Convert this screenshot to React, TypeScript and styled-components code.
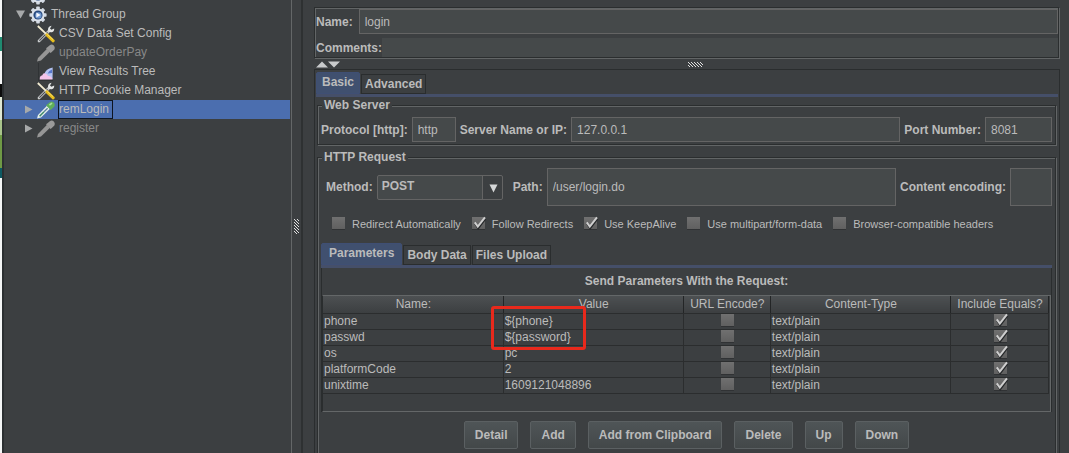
import React from "react";
import styled, { createGlobalStyle, css } from "styled-components";

const Global = createGlobalStyle`
  * { box-sizing: border-box; }
  body {
    margin: 0;
    overflow: hidden;
    background: #3c3f41;
    color: #bbbbbb;
    font: 12px "Liberation Sans", Arial, sans-serif;
  }
  button, input, select { font: inherit; color: inherit; }
`;

const etched = css`
  border: 1px solid #2b2e2f;
  box-shadow: 1px 1px 0 #626566, inset 1px 1px 0 #626566;
`;

const Shell = styled.div`
  display: flex;
  height: 100vh;
  overflow: hidden;
`;

const Desktop = styled.div`
  width: 4px;
  flex: none;
  border-right: 2px solid #2b2f31;
  background: linear-gradient(
    #f4f6f6 0 37px, #1f8a70 37px 51px, #f4f6f6 51px 84px, #0c0c0c 84px 97px,
    #dfe8d4 97px 120px, #a9c48b 120px 135px, #6f9a45 135px 168px, #0d5a63 168px 178px, #f4f6f6 178px
  );
`;

const TreePane = styled.nav`
  width: 288px;
  flex: none;
  overflow: hidden;
  border-right: 1px solid #646768;
`;

const Tree = styled.ul`
  list-style: none;
  margin: -14px 0 0;
  padding: 0;
`;

const Node = styled.li<{ $level: number; $selected?: boolean; $disabled?: boolean }>`
  display: flex;
  align-items: center;
  height: 19px;
  margin-right: 1px;
  padding-left: ${(p) => 12 + p.$level * 8}px;
  color: ${(p) => (p.$disabled ? "#888888" : "#bbbbbb")};
  background: ${(p) => (p.$selected ? "#4b6eaf" : "transparent")};
`;

const Twisty = styled.span`
  width: 12px;
  height: 19px;
  display: flex;
  align-items: center;
`;

const NodeText = styled.span<{ $focus?: boolean }>`
  height: 19px;
  line-height: 17px;
  padding: 0 3px 0 0;
  border: 1px solid ${(p) => (p.$focus ? "#0d1420" : "transparent")};
`;

const NodeIcon = styled.span`
  display: flex;
  width: 22px;
  padding-left: 1px;
`;

const SideSplitter = styled.div`
  width: 11px;
  flex: none;
  display: flex;
  align-items: center;
  justify-content: center;
  border-right: 2px solid #2e3132;
`;

const Main = styled.main`
  flex: 1;
  min-width: 0;
  display: flex;
  flex-direction: column;
  padding: 7px 9px 0 11px;
`;

const Identity = styled.section`
  ${etched}
  flex: none;
  margin: 0 1px 1px 0;
  padding: 1px 0 0 1px;
`;

const Line = styled.div<{ $gap?: number; $top?: number; $indent?: number }>`
  display: flex;
  align-items: center;
  gap: ${(p) => p.$gap ?? 4}px;
  margin-top: ${(p) => p.$top ?? 0}px;
  padding-left: ${(p) => p.$indent ?? 0}px;
`;

const Label = styled.label`
  font-weight: bold;
  white-space: nowrap;
`;

const Field = styled.input<{ $w?: number; $tall?: boolean; $plain?: boolean }>`
  ${(p) => (p.$w ? css`width: ${p.$w}px; flex: none;` : css`flex: 1; min-width: 0;`)}
  height: ${(p) => (p.$tall ? 38 : p.$plain ? 19 : 25)}px;
  padding: 0 5px;
  border: ${(p) => (p.$plain ? "0" : "1px solid #646464")};
  border-radius: 0;
  background: #45494a;
  outline: none;
`;

const TopSplitter = styled.div`
  display: flex;
  flex: none;
  align-items: center;
  height: 10px;
  padding: 0 10px 0 2px;
`;

const Grip = styled.span`
  margin: 0 auto;
  display: flex;
`;

const Pane = styled.section`
  flex: 1;
  border: 1px solid #2a2d2e;
  border-bottom: 0;
  padding: 2px 1px 0;
`;

const TabBar = styled.div`
  display: flex;
  align-items: flex-end;
  gap: 1px;
  border-bottom: 3px solid #454f69;
`;

const Tab = styled.button<{ $active?: boolean; $inset?: number }>`
  height: ${(p) => (p.$active ? 22 : 20)}px;
  padding: 0 ${(p) => p.$inset ?? 3}px ${(p) => (p.$active ? 2 : 0)}px;
  font-weight: bold;
  border: 1px solid ${(p) => (p.$active ? "#3f4f74" : "#2a2d2e")};
  border-radius: ${(p) => (p.$active ? "2px 2px 0 0" : "0")};
  background: ${(p) => (p.$active ? "#40506f" : "#3c3f41")};
`;

const Group = styled.fieldset<{ $open?: boolean }>`
  ${etched}
  margin: 0 2px 4px 1px;
  min-width: 0;
  padding: 4px 3px 2px;
  ${(p) => p.$open && css`
    border-bottom: 0;
    padding: 3px 3px 16px;
  `}
`;

const Legend = styled.legend`
  margin-left: 1px;
  padding: 0 2px;
  font-weight: bold;
  line-height: 16px;
  background: #3c3f41;
`;

const Combo = styled.div`
  position: relative;
  width: 126px;
  flex: none;
  display: flex;
  margin-right: 6px;
`;

const Select = styled.select`
  appearance: none;
  width: 100%;
  height: 25px;
  padding: 0 4px 2px;
  border: 1px solid #646464;
  border-radius: 2px;
  font-weight: bold;
  background: linear-gradient(90deg, #45494a 104px, #646464 104px 105px, #3c3f41 105px);
  outline: none;
`;

const ComboArrow = styled.svg`
  position: absolute;
  right: 5px;
  top: 9px;
  pointer-events: none;
`;

const Options = styled.div`
  display: flex;
  gap: 11px;
  margin: 11px 0 13px 11px;
`;

const Option = styled.label`
  display: flex;
  align-items: center;
  gap: 7px;
  height: 13px;
  font-size: 11px;
  white-space: nowrap;
`;

const TickBox = styled.span`
  position: relative;
  display: inline-block;
  width: 13px;
  height: 13px;
  vertical-align: top;
  input {
    appearance: none;
    display: block;
    width: 13px;
    height: 13px;
    margin: 0;
    background: linear-gradient(#707070, #606060);
    border-bottom: 1px solid #303234;
  }
  svg {
    position: absolute;
    left: 0;
    top: -1px;
    pointer-events: none;
  }
`;

const Params = styled.div`
  border: 0 solid #2a2d2e;
  border-width: 0 1px;
  padding: 5px 0 0;
`;

const Caption = styled.div`
  height: 16px;
  line-height: 16px;
  text-align: center;
  font-weight: bold;
  margin-bottom: 6px;
`;

const TableBox = styled.div`
  position: relative;
  height: 117px;
  border: 1px solid #646768;
  border-left-color: #2a2d2e;
  padding-right: 1px;
`;

const Grid = styled.table`
  width: 100%;
  table-layout: fixed;
  border-collapse: collapse;
  th, td {
    border-right: 1px solid #2b2d2e;
    border-bottom: 1px solid #2b2d2e;
    padding: 0 0 0 1px;
    height: 16px;
    line-height: 15px;
    white-space: nowrap;
  }
  th {
    height: 17px;
    font-weight: normal;
    background: linear-gradient(#4d5052, #3c3f41);
    border-right-color: #232526;
  }
  td.mark { text-align: center; }
`;

const Highlight = styled.div`
  position: absolute;
  left: 168px;
  top: 10px;
  width: 95px;
  height: 44px;
  border: 3px solid #e8291c;
  border-radius: 3px;
`;

const Actions = styled.div`
  display: flex;
  justify-content: center;
  gap: 12px;
  padding-top: 9px;
`;

const Action = styled.button`
  height: 28px;
  padding: 0 10px 1px;
  font-weight: bold;
  white-space: nowrap;
  border: 1px solid #5b6062;
  border-radius: 2px;
  background: linear-gradient(#4f5557, #434849);
`;

const Gear = () => (
  <svg width="18" height="18" viewBox="0 0 18 18">
    {[0, 45, 90, 135].map((a) => (
      <rect key={a} x="7.2" y="0.4" width="3.6" height="17.2" rx="0.8" fill="#d3dae3" transform={`rotate(${a} 9 9)`} />
    ))}
    <circle cx="9" cy="9" r="6.6" fill="#dbe1e9" />
    <circle cx="9" cy="9" r="4.6" fill="#27497d" />
    <circle cx="9.4" cy="9.4" r="3.2" fill="#6f97cf" />
    <path d="M7.4 6.4 11.6 9 7.4 11.6Z" fill="#f4f8ff" />
  </svg>
);

const Tools = () => (
  <svg width="18" height="18" viewBox="0 0 18 18">
    <path d="M2 16 12 6" stroke="#c9cbcc" strokeWidth="2.8" strokeLinecap="round" />
    <path d="M2.4 15.6 10.6 7.4" stroke="#45484a" strokeWidth="1.1" />
    <path d="M14.6 0.8 13 3.4 14.4 4.8 17.2 3.4Q17.4 6.4 14.9 7.2 12.2 7.8 11 5.6 10.6 1.6 14.6 0.8Z" fill="#e4e6e6" />
    <path d="M0.8 1 9.6 9.4" stroke="#f3ecd2" strokeWidth="1.8" />
    <path d="M10 9.8 16.2 15.8" stroke="#e6bd1d" strokeWidth="3" strokeLinecap="round" />
    <path d="M10.4 9.4 16 14.6" stroke="#f8e27a" strokeWidth="0.8" />
  </svg>
);

const Dropper = ({ live }: { live?: boolean }) => (
  <svg width="18" height="18" viewBox="0 0 18 18">
    <path d="M0 17.4 1 14 10 4.8 13 7.8 4 16.6Z" fill={live ? "#e6f0ec" : "#969696"} />
    {live && <path d="M2.6 15.2 7 10.8" stroke="#3f8a6a" strokeWidth="1.5" />}
    {live && <path d="M7 10.8 10.6 7.2" stroke="#5b7f9c" strokeWidth="1.3" />}
    <path d="M9 4.2 13.6 9 14.8 8 17.4 5.4Q18.4 3.2 16.8 1.4 14.8 -0.2 12.8 1.2L10.4 3.2Z" fill={live ? "#5fae5a" : "#9a9a9a"} />
    {live && <path d="M12.4 4.2 15 2.2" stroke="#a8dca2" strokeWidth="1.6" />}
  </svg>
);

const Chart = () => (
  <svg width="18" height="18" viewBox="0 0 18 18">
    <path d="M1.5 0V17.5H16" stroke="#303335" fill="none" />
    <path d="M7 12Q8.4 6 15.6 4.6V16H7Z" fill="#b4c4f3" />
    <path d="M10.6 10.4Q12 7.4 15 6.4V10Z" fill="#5876cc" />
    <path d="M2.8 16.6Q2.4 12.6 5.4 12.2 6 9.4 8.4 10.4 10.4 11 11 13 14.4 12.4 15.6 16.6Z" fill="#f3c4ea" />
  </svg>
);

const Arrow = ({ open }: { open?: boolean }) => (
  <svg width="9" height="9" viewBox="0 0 9 9">
    <path d={open ? "M0 0.5H9L4.5 8.5Z" : "M1 0.5V8.5L8.5 4.5Z"} fill="#a7a9aa" />
  </svg>
);

const Tick = ({ label, checked, id }: { label?: string; checked?: boolean; id?: string }) => (
  <TickBox>
    <input type="checkbox" id={id} aria-label={label} defaultChecked={checked} />
    {checked && (
      <svg width="15" height="14" viewBox="0 0 15 14">
        <path d="M3.2 7.4 6.2 12 13.4 2.6" fill="none" stroke="#26282a" strokeWidth="2.2" />
        <path d="M2.8 6.4 5.8 10.6 13 1.4" fill="none" stroke="#cfcfcf" strokeWidth="2" />
      </svg>
    )}
  </TickBox>
);

const Dots = ({ vertical }: { vertical?: boolean }) => {
  const w = vertical ? 5 : 15;
  const h = vertical ? 15 : 5;
  const cells = Array.from({ length: w * h }, (_, i) => [i % w, Math.floor(i / w)]);
  return (
    <svg width={w} height={h} viewBox={`0 0 ${w} ${h}`} shapeRendering="crispEdges">
      {cells
        .filter(([x, y]) => (x - y + 15) % 3 === 0)
        .map(([x, y]) => (
          <rect key={`${x}-${y}`} x={x} y={y} width="1" height="1" fill="#e0e0e0" />
        ))}
    </svg>
  );
};

const nodes = [
  { text: "CSV Data Set Config", icon: <Tools /> },
  { text: "updateOrderPay", icon: <Dropper />, disabled: true },
  { text: "View Results Tree", icon: <Chart /> },
  { text: "HTTP Cookie Manager", icon: <Tools /> },
  { text: "remLogin", icon: <Dropper live />, selected: true, branch: true },
  { text: "register", icon: <Dropper />, disabled: true, branch: true },
];

const options = [
  { text: "Redirect Automatically", on: false },
  { text: "Follow Redirects", on: true },
  { text: "Use KeepAlive", on: true },
  { text: "Use multipart/form-data", on: false },
  { text: "Browser-compatible headers", on: false },
];

const rows = [
  ["phone", "${phone}"],
  ["passwd", "${password}"],
  ["os", "pc"],
  ["platformCode", "2"],
  ["unixtime", "1609121048896"],
];

export default function App() {
  return (
    <Shell>
      <Global />
      <Desktop />
      <TreePane aria-label="Test plan">
        <Tree>
          <Node $level={0}>
            <Twisty />
            <NodeIcon><Gear /></NodeIcon>
          </Node>
          <Node $level={0}>
            <Twisty><Arrow open /></Twisty>
            <NodeIcon><Gear /></NodeIcon>
            <NodeText>Thread Group</NodeText>
          </Node>
          {nodes.map((n) => (
            <Node key={n.text} $level={1} $selected={n.selected} $disabled={n.disabled}>
              <Twisty>{n.branch && <Arrow />}</Twisty>
              <NodeIcon>{n.icon}</NodeIcon>
              <NodeText $focus={n.selected}>{n.text}</NodeText>
            </Node>
          ))}
        </Tree>
      </TreePane>
      <SideSplitter><Dots vertical /></SideSplitter>
      <Main>
        <Identity>
          <Line $gap={6}>
            <Label htmlFor="name">Name:</Label>
            <Field id="name" defaultValue="login" />
          </Line>
          <Line $gap={0} $top={4}>
            <Label htmlFor="comments">Comments:</Label>
            <Field id="comments" $plain />
          </Line>
        </Identity>
        <TopSplitter>
          <svg width="25" height="7" viewBox="0 0 25 7">
            <path d="M0 6.5 6 0.5 12 6.5ZM12 0.5H24L18 6.5Z" fill="#c8cacb" />
          </svg>
          <Grip><Dots /></Grip>
        </TopSplitter>
        <Pane>
          <TabBar>
            <Tab $active $inset={5}>Basic</Tab>
            <Tab>Advanced</Tab>
          </TabBar>
          <Group>
            <Legend>Web Server</Legend>
            <Line>
              <Label htmlFor="protocol">Protocol [http]:</Label>
              <Field id="protocol" $w={44} defaultValue="http" />
              <Label htmlFor="server">Server Name or IP:</Label>
              <Field id="server" defaultValue="127.0.0.1" />
              <Label htmlFor="port">Port Number:</Label>
              <Field id="port" $w={67} defaultValue="8081" />
            </Line>
          </Group>
          <Group $open>
            <Legend>HTTP Request</Legend>
            <Line $indent={5}>
              <Label htmlFor="method">Method:</Label>
              <Combo>
                <Select id="method" defaultValue="POST">
                  <option>POST</option>
                  <option>GET</option>
                </Select>
                <ComboArrow width="9" height="9" viewBox="0 0 9 9">
                  <path d="M0.5 0.5H8.5L4.5 8.5Z" fill="#d5d7d8" />
                </ComboArrow>
              </Combo>
              <Label htmlFor="path">Path:</Label>
              <Field id="path" $tall defaultValue="/user/login.do" />
              <Label htmlFor="encoding">Content encoding:</Label>
              <Field id="encoding" $tall $w={42} />
            </Line>
            <Options>
              {options.map((o, i) => (
                <Option key={o.text} htmlFor={`option-${i}`}>
                  <Tick id={`option-${i}`} checked={o.on} />
                  {o.text}
                </Option>
              ))}
            </Options>
            <TabBar>
              <Tab $active $inset={7}>Parameters</Tab>
              <Tab>Body Data</Tab>
              <Tab>Files Upload</Tab>
            </TabBar>
            <Params>
              <Caption>Send Parameters With the Request:</Caption>
              <TableBox>
                <Grid>
                  <colgroup>
                    <col />
                    <col />
                    <col style={{ width: 87 }} />
                    <col />
                    <col style={{ width: 98 }} />
                  </colgroup>
                  <thead>
                    <tr>
                      <th>Name:</th>
                      <th>Value</th>
                      <th>URL Encode?</th>
                      <th>Content-Type</th>
                      <th>Include Equals?</th>
                    </tr>
                  </thead>
                  <tbody>
                    {rows.map(([name, value]) => (
                      <tr key={name}>
                        <td>{name}</td>
                        <td>{value}</td>
                        <td className="mark"><Tick label={`URL encode ${name}`} /></td>
                        <td>text/plain</td>
                        <td className="mark"><Tick label={`Include equals ${name}`} checked /></td>
                      </tr>
                    ))}
                  </tbody>
                </Grid>
                <Highlight />
              </TableBox>
            </Params>
            <Actions>
              {["Detail", "Add", "Add from Clipboard", "Delete", "Up", "Down"].map((a) => (
                <Action key={a}>{a}</Action>
              ))}
            </Actions>
          </Group>
        </Pane>
      </Main>
    </Shell>
  );
}
